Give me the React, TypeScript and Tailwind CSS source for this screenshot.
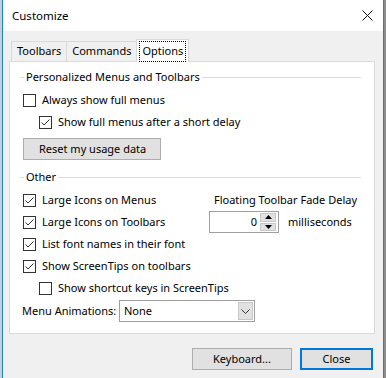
import { useState } from 'react';

type CheckRowProps = {
  label: string;
  checked: boolean;
  indent?: boolean;
  onToggle: () => void;
};

const CheckRow = ({ label, checked, indent, onToggle }: CheckRowProps) => (
  <div
    className={`h-[22px] flex items-center gap-[6px] cursor-default ${indent ? 'pl-[19px]' : 'pl-[3px]'}`}
    onClick={onToggle}
  >
    <span className="w-[13px] h-[13px] border border-[#333333] bg-white flex items-center justify-center shrink-0">
      {checked && (
        <svg width="11" height="11" viewBox="0 0 11 11">
          <path d="M1.5 5.5 L4 8 L9.5 2.5" fill="none" stroke="#333333" strokeWidth="1" />
        </svg>
      )}
    </span>
    <span className="whitespace-nowrap">{label}</span>
  </div>
);

const GroupLabel = ({ title }: { title: string }) => (
  <div className="h-[20px] flex items-center">
    <div className="w-[4px] h-px bg-[#dcdcdc]" />
    <span className="px-[2px] whitespace-nowrap">{title}</span>
    <div className="flex-1 h-px bg-[#dcdcdc]" />
  </div>
);

const Tab = ({ label, active }: { label: string; active?: boolean }) => (
  <div
    className={
      active
        ? 'h-[23px] px-[2px] pt-[1px] bg-white border border-b-0 border-[#d9d9d9] -mb-px relative z-10'
        : 'h-[20px] px-[5px] flex items-center bg-[#f0f0f0] border border-b-0 border-[#d9d9d9] -mr-px'
    }
  >
    {active ? (
      <div className="h-[21px] px-[2px] flex items-center border border-dotted border-black">{label}</div>
    ) : (
      label
    )}
  </div>
);

export default function App() {
  const [checks, setChecks] = useState({
    alwaysFull: false,
    afterDelay: true,
    largeMenus: true,
    largeToolbars: true,
    fontNames: true,
    screenTips: true,
    shortcutKeys: false,
  });

  const toggle = (key: keyof typeof checks) => setChecks({ ...checks, [key]: !checks[key] });

  return (
    <div
      className="w-[386px] h-[378px] flex overflow-hidden text-[11px] text-black"
      style={{ fontFamily: '"Noto Sans", "Segoe UI", sans-serif' }}
    >
      <div className="w-[2px] bg-[#c9ced6]" />
      <div className="w-[382px] flex flex-col border-x border-[#1883d7]">
        {/* title bar */}
        <div className="h-[31px] bg-white flex items-center pl-[9px] pr-[10px]">
          <span className="flex-1 text-[11.5px]">Customize</span>
          <svg width="11" height="11" viewBox="0 0 11 11">
            <path d="M0.5 0.5 L10.5 10.5 M10.5 0.5 L0.5 10.5" stroke="#111111" strokeWidth="1" />
          </svg>
        </div>

        <div className="flex-1 bg-[#f0f0f0] px-[6px] flex flex-col">
          {/* tabs */}
          <div className="h-[30px] pl-[2px] flex items-end">
            <Tab label="Toolbars" />
            <Tab label="Commands" />
            <Tab label="Options" active />
          </div>

          {/* panel */}
          <div className="h-[273px] w-[366px] bg-white border border-[#d9d9d9] pl-[10px] pr-[13px] pt-[5px]">
            <GroupLabel title="Personalized Menus and Toolbars" />
            <div className="mt-[2px]">
              <CheckRow label="Always show full menus" checked={checks.alwaysFull} onToggle={() => toggle('alwaysFull')} />
              <CheckRow
                label="Show full menus after a short delay"
                checked={checks.afterDelay}
                indent
                onToggle={() => toggle('afterDelay')}
              />
            </div>
            <button
              type="button"
              className="mt-[5px] ml-[3px] w-[138px] h-[22px] bg-[#e1e1e1] border border-[#adadad] text-left pl-[15px]"
            >
              Reset my usage data
            </button>

            <div className="mt-[7px]">
              <GroupLabel title="Other" />
            </div>
            <div className="mt-[2px] flex">
              <div className="w-[189px]">
                <CheckRow label="Large Icons on Menus" checked={checks.largeMenus} onToggle={() => toggle('largeMenus')} />
                <CheckRow label="Large Icons on Toolbars" checked={checks.largeToolbars} onToggle={() => toggle('largeToolbars')} />
                <CheckRow label="List font names in their font" checked={checks.fontNames} onToggle={() => toggle('fontNames')} />
                <CheckRow label="Show ScreenTips on toolbars" checked={checks.screenTips} onToggle={() => toggle('screenTips')} />
              </div>
              <div className="flex-1">
                <div className="h-[22px] flex items-center pl-[5px] whitespace-nowrap">Floating Toolbar Fade Delay</div>
                <div className="h-[22px] flex items-center gap-[9px]">
                  <div className="w-[70px] h-[22px] border border-[#a0a0a0] bg-white flex items-center">
                    <span className="flex-1 text-right pr-[3px]">0</span>
                    <div className="w-[16px] h-[18px] mr-[2px] flex flex-col gap-px">
                      <div className="flex-1 bg-[#e1e1e1] border border-[#c8c8c8] flex items-center justify-center">
                        <svg width="7" height="4" viewBox="0 0 7 4">
                          <path d="M0 4 L3.5 0 L7 4 Z" fill="#000" />
                        </svg>
                      </div>
                      <div className="flex-1 bg-[#e1e1e1] border border-[#c8c8c8] flex items-center justify-center">
                        <svg width="7" height="4" viewBox="0 0 7 4">
                          <path d="M0 0 L7 0 L3.5 4 Z" fill="#000" />
                        </svg>
                      </div>
                    </div>
                  </div>
                  <span>milliseconds</span>
                </div>
              </div>
            </div>
            <CheckRow label="Show shortcut keys in ScreenTips" checked={checks.shortcutKeys} indent onToggle={() => toggle('shortcutKeys')} />
            <div className="mt-[1px] h-[22px] flex items-center">
              <span className="w-[99px] pl-[2px] whitespace-nowrap">Menu Animations:</span>
              <div className="w-[136px] h-[22px] border border-[#a0a0a0] bg-white flex items-center pl-[4px] pr-[1px]">
                <span className="flex-1">None</span>
                <div className="w-[15px] h-[18px] bg-[#e1e1e1] border border-[#c8c8c8] flex items-center justify-center">
                  <svg width="9" height="5" viewBox="0 0 9 5">
                    <path d="M0.5 0.5 L4.5 4.5 L8.5 0.5" fill="none" stroke="#333" strokeWidth="1" />
                  </svg>
                </div>
              </div>
            </div>
          </div>

          {/* footer buttons */}
          <div className="mt-[14px] flex justify-end gap-[8px] pr-[4px]">
            <button type="button" className="w-[100px] h-[22px] bg-[#e1e1e1] border border-[#adadad]">
              Keyboard...
            </button>
            <button type="button" className="w-[73px] h-[22px] bg-[#e1e1e1] border-2 border-[#0078d7]">
              Close
            </button>
          </div>
        </div>
      </div>
      <div className="w-[2px] bg-[#8d8d8d]" />
    </div>
  );
}
